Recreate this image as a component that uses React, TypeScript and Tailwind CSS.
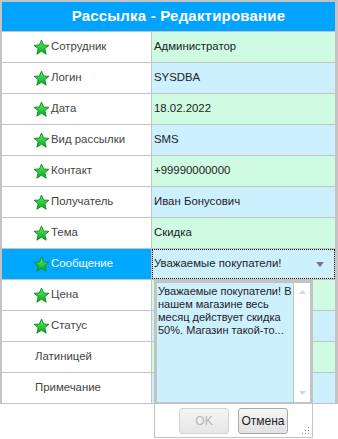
import React from 'react';

type Row = { label: string; value: string; star: boolean; tone: 'mint' | 'blue' };

const rows: Row[] = [
  { label: 'Сотрудник', value: 'Администратор', star: true, tone: 'mint' },
  { label: 'Логин', value: 'SYSDBA', star: true, tone: 'blue' },
  { label: 'Дата', value: '18.02.2022', star: true, tone: 'mint' },
  { label: 'Вид рассылки', value: 'SMS', star: true, tone: 'blue' },
  { label: 'Контакт', value: '+99990000000', star: true, tone: 'mint' },
  { label: 'Получатель', value: 'Иван Бонусович', star: true, tone: 'blue' },
  { label: 'Тема', value: 'Скидка', star: true, tone: 'mint' },
  { label: 'Сообщение', value: 'Уважаемые покупатели!', star: true, tone: 'blue' },
  { label: 'Цена', value: '', star: true, tone: 'mint' },
  { label: 'Статус', value: '', star: true, tone: 'blue' },
  { label: 'Латиницей', value: '', star: false, tone: 'mint' },
  { label: 'Примечание', value: '', star: false, tone: 'blue' },
];

function Star() {
  return (
    <svg width="17" height="17" viewBox="0 0 17 17" className="shrink-0">
      <defs>
        <linearGradient id="starFill" x1="0" y1="0" x2="0" y2="1">
          <stop offset="0" stopColor="#5cf06a" />
          <stop offset="1" stopColor="#07a81d" />
        </linearGradient>
      </defs>
      <path
        d="M8.5 1 L10.6 6 L16 6.3 L11.8 9.7 L13.2 15.2 L8.5 12.2 L3.8 15.2 L5.2 9.7 L1 6.3 L6.4 6 Z"
        fill="url(#starFill)"
        stroke="#0c8a22"
        strokeWidth="0.9"
        strokeLinejoin="round"
      />
    </svg>
  );
}

export default function App() {
  return (
    <div
      className="relative w-[338px] h-[439px] bg-white overflow-hidden"
      style={{ fontFamily: '"Liberation Sans", Arial, sans-serif' }}
    >
      <div className="border-l-2 border-r-[3px] border-t-2 border-[#c3c3c3]">
        {/* Header */}
        <div className="h-[30px] bg-[#00a3ff] border-b border-[#c3c3c3] flex items-center justify-center pl-5">
          <span className="text-white font-bold text-[15px] tracking-[0.2px]">Рассылка - Редактирование</span>
        </div>

        {rows.map((r, i) => {
          const selected = r.label === 'Сообщение';
          return (
            <div key={i} className="flex h-[31px] border-b border-[#c3c3c3]">
              <div
                className={`w-[150px] flex items-center border-r border-[#c3c3c3] text-[11.4px] ${
                  selected ? 'bg-[#00a8ff] text-white' : 'bg-white text-[#444]'
                } ${r.star ? 'pl-[31px]' : 'pl-[33px]'}`}
              >
                {r.star && <Star />}
                <span className={r.star ? 'ml-[1px]' : ''}>{r.label}</span>
              </div>
              <div
                className={`flex-1 flex items-center text-[11.4px] text-[#222] ${
                  r.tone === 'mint' ? 'bg-[#cffbe3]' : 'bg-[#cdf0ff]'
                } ${selected ? 'border border-dotted border-black pl-[1px] pr-[10px]' : 'pl-[2px]'}`}
              >
                <span className="flex-1">{r.value}</span>
                {selected && (
                  <svg width="8" height="5" viewBox="0 0 8 5">
                    <path d="M0 0 H8 L4 5 Z" fill="#777" />
                  </svg>
                )}
              </div>
            </div>
          );
        })}
      </div>

      {/* Dropdown editor */}
      <div className="absolute left-[154px] top-[280px] w-[159px] h-[158px] bg-white border border-[#c3c3c3] flex flex-col">
        <div className="h-[123px] flex border-2 border-[#c3c3c3]">
          <div className="flex-1 bg-[#cdf0ff] pl-[1px] pt-[2px] text-[11px] leading-[13px] text-[#222]">
            Уважаемые покупатели! В нашем магазине весь месяц действует скидка 50%. Магазин такой-то...
          </div>
          <div className="w-[17px] bg-white border-l border-[#c3c3c3] flex flex-col items-center justify-between py-[7px]">
            <svg width="7" height="4" viewBox="0 0 7 4">
              <path d="M0 4 H7 L3.5 0 Z" fill="#d6d6d6" />
            </svg>
            <svg width="7" height="4" viewBox="0 0 7 4">
              <path d="M0 0 H7 L3.5 4 Z" fill="#d6d6d6" />
            </svg>
          </div>
        </div>
        <div className="flex-1 flex items-center pl-[24px] gap-[9px] relative">
          <button className="w-[50px] h-[26px] rounded-[3px] border border-[#d4d4d4] bg-gradient-to-b from-[#f4f4f4] to-[#e6e6e6] text-[12px] text-[#b5b5b5]">
            OK
          </button>
          <button className="w-[50px] h-[26px] rounded-[3px] border border-[#a8a8a8] bg-gradient-to-b from-[#f6f6f6] to-[#e2e2e2] text-[12px] text-[#222]">
            Отмена
          </button>
          <svg width="9" height="9" viewBox="0 0 9 9" className="absolute right-[2px] bottom-[2px]">
            <g fill="#8a8a8a">
              <rect x="7" y="1" width="1" height="1" />
              <rect x="4" y="4" width="1" height="1" />
              <rect x="7" y="4" width="1" height="1" />
              <rect x="1" y="7" width="1" height="1" />
              <rect x="4" y="7" width="1" height="1" />
              <rect x="7" y="7" width="1" height="1" />
            </g>
          </svg>
        </div>
      </div>
    </div>
  );
}
